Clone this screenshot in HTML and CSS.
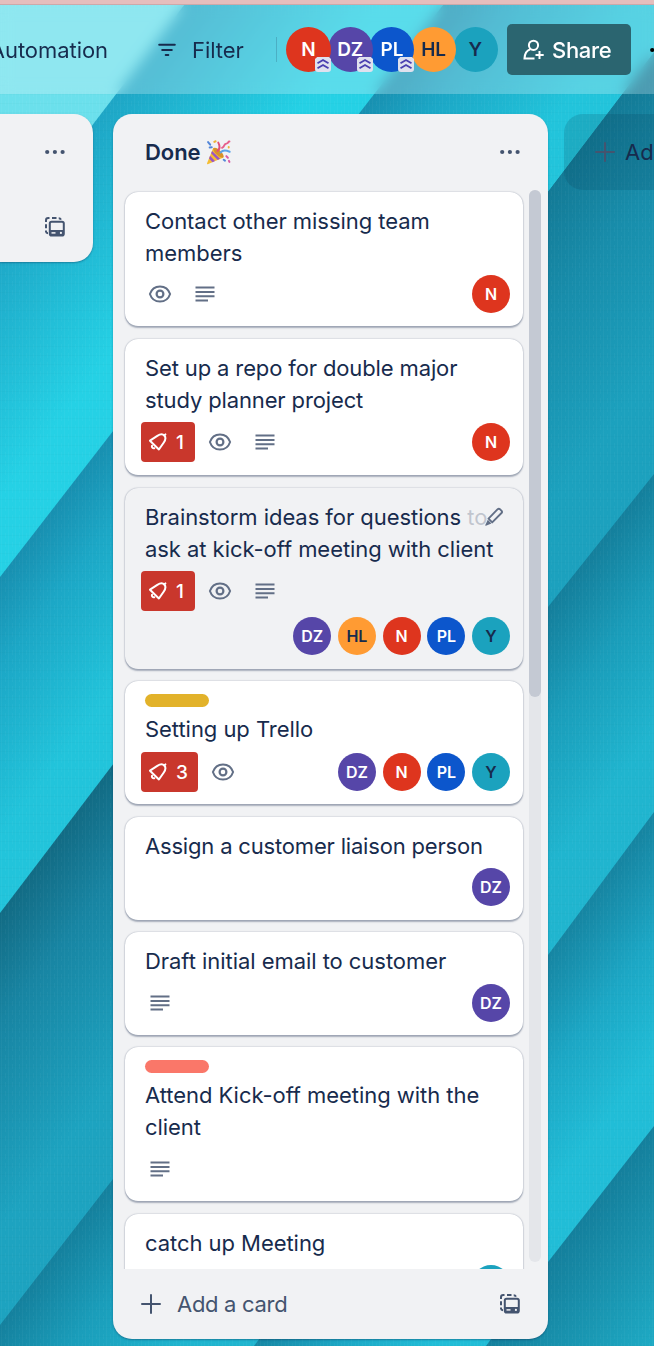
FILE: index.html
```html
<!DOCTYPE html>
<html lang="en">
<head>
<meta charset="utf-8">
<title>Board</title>
<link rel="stylesheet" href="styles.css">
</head>
<body>
<svg class="defs" width="0" height="0" aria-hidden="true">
  <symbol id="dots" viewBox="0 0 20 6"><circle cx="2.200" cy="3" r="2.100"/><circle cx="9.900" cy="3" r="2.100"/><circle cx="17.600" cy="3" r="2.100"/></symbol>
  <symbol id="eye" viewBox="0 0 24 24"><path d="M1.900 12C3.500 7.200 7.300 4.400 12 4.400S20.500 7.200 22.100 12C20.500 16.800 16.700 19.600 12 19.600S3.500 16.800 1.900 12Z" fill="none" stroke="currentColor" stroke-width="2"/><circle cx="12" cy="12" r="3.400" fill="none" stroke="currentColor" stroke-width="2.200"/></symbol>
  <symbol id="lines" viewBox="0 0 20 16"><path d="M.5 1.500H19.500M.5 5.900H19.500M.5 10.300H19.500M.5 14.500H13" stroke="currentColor" stroke-width="2"/></symbol>
  <symbol id="bell" viewBox="0 0 20 20"><g fill="none" stroke="currentColor" stroke-width="2" stroke-linejoin="round" stroke-linecap="round"><path d="M2 8.700 9.300 3.900C12 2.100 14.900 2 16.300 3.500 17.800 5.100 17.500 8 15.800 10.500L10.900 17.500Z"/><path d="M4 13.800C3.500 15.200 4.600 16.500 6.300 16.200"/><path d="M16.300 3.300 17.400 2.400"/></g></symbol>
  <symbol id="plus" viewBox="0 0 20 20"><path d="M10 1V19M1 10H19" stroke="currentColor" stroke-width="2" stroke-linecap="round"/></symbol>
  <symbol id="template" viewBox="0 0 20 20"><g fill="none" stroke="currentColor" stroke-width="2"><path d="M1 5V3.200Q1 1 3.200 1H4.500M7 1H11.500M13.700 1.200Q15.300 1.200 16 2.600M1 7.200V11.200M1 13.500V14.600Q1.200 16.200 3 16.200"/><rect x="4.800" y="4.800" width="14" height="13.800" rx="1.800"/></g><path d="M5 13H19V17.800Q19 19 17.800 19H6Q4.800 19 4.800 17.800Z" fill="currentColor"/><path d="M6.500 15.900H10.500" stroke="#f1f2f4" stroke-width="1.500"/><circle cx="15.900" cy="15.900" r="1.100" fill="#f1f2f4"/></symbol>
  <symbol id="chevrons" viewBox="0 0 16 15"><path d="M2.200 0H13.800L16 2V12Q16 15 13 15H3Q0 15 0 12V2Z" fill="#dfe1ee"/><path d="M2.500 6.300 8 3 13.500 6.300M2.500 11.300 8 8 13.500 11.300" fill="none" stroke="#4a3fb0" stroke-width="1.900"/></symbol>
</svg>

<svg class="wallpaper" width="654" height="1346" viewBox="0 0 654 1346" aria-hidden="true">
  <defs>
    <linearGradient id="g1" gradientUnits="userSpaceOnUse" x1="0" y1="246" x2="122" y2="340"><stop offset="0" stop-color="#1ea6c6"/><stop offset="1" stop-color="#25d1e5"/></linearGradient>
    <linearGradient id="g2" gradientUnits="userSpaceOnUse" x1="0" y1="577" x2="126" y2="674"><stop offset="0" stop-color="#188fb0"/><stop offset=".35" stop-color="#1ca7c6"/><stop offset="1" stop-color="#22c4db"/></linearGradient>
    <linearGradient id="g3" gradientUnits="userSpaceOnUse" x1="0" y1="913" x2="153" y2="1031"><stop offset="0" stop-color="#126b84"/><stop offset=".35" stop-color="#1885a3"/><stop offset="1" stop-color="#1da3c0"/></linearGradient>
    <linearGradient id="g3r" gradientUnits="userSpaceOnUse" x1="548" y1="192" x2="701" y2="310"><stop offset="0" stop-color="#137a96"/><stop offset=".4" stop-color="#188dab"/><stop offset="1" stop-color="#1ca1be"/></linearGradient>
    <linearGradient id="g4" gradientUnits="userSpaceOnUse" x1="548" y1="607" x2="675" y2="705"><stop offset="0" stop-color="#147e9b"/><stop offset=".45" stop-color="#1a9dba"/><stop offset="1" stop-color="#20b5cf"/></linearGradient>
    <linearGradient id="g5" gradientUnits="userSpaceOnUse" x1="548" y1="955" x2="664" y2="1044"><stop offset="0" stop-color="#1685a2"/><stop offset=".5" stop-color="#1ca7c5"/><stop offset="1" stop-color="#21bdd7"/></linearGradient>
    <linearGradient id="g6" gradientUnits="userSpaceOnUse" x1="548" y1="1262" x2="664" y2="1351"><stop offset="0" stop-color="#147f9c"/><stop offset="1" stop-color="#1faec8"/></linearGradient>
    <pattern id="weave" width="7" height="9" patternUnits="userSpaceOnUse"><path d="M1.500 0V9M5.500 2V7" stroke="#fff" stroke-opacity=".03"/><path d="M0 4.500H7" stroke="#00415a" stroke-opacity=".025"/></pattern>
  </defs>
  <rect width="654" height="1346" fill="#6be0ec"/>
  <path d="M0 246 188 0H654V1346H0Z" fill="url(#g1)"/>
  <path d="M0 577 447 0H654V1346H0Z" fill="url(#g2)"/>
  <path d="M0 913 548 192 694 0V1346H0Z" fill="url(#g3)"/>
  <path d="M330 479 548 192 694 0V1346H330Z" fill="url(#g3r)"/>
  <path d="M0 1325 113 1179 548 607 654 474V1346H0Z" fill="url(#g4)"/>
  <path d="M254 1346 548 955 654 812V1346Z" fill="url(#g5)"/>
  <path d="M486 1346 548 1262 654 1126V1346Z" fill="url(#g6)"/>
  <rect width="654" height="1346" fill="url(#weave)"/>
</svg>

<div class="page">
  <div class="window-edge"></div>
  <header class="toolbar">
    <div class="automation"><span>Automation</span></div>
    <div class="filter">
      <svg width="18" height="14" viewBox="0 0 18 14"><path d="M1.200 1.800H16.800M4.200 7H13.800M7.700 12H10.300" stroke="currentColor" stroke-width="2" stroke-linecap="round"/></svg>
      <span>Filter</span>
    </div>
    <div class="divider"></div>
    <div class="members">
      <div class="member red">N<svg class="rank"><use href="#chevrons"/></svg></div>
      <div class="member purple">DZ<svg class="rank"><use href="#chevrons"/></svg></div>
      <div class="member blue">PL<svg class="rank"><use href="#chevrons"/></svg></div>
      <div class="member orange">HL</div>
      <div class="member teal">Y</div>
    </div>
    <button class="share">
      <svg width="22" height="22" viewBox="0 0 22 22"><g fill="none" stroke="currentColor" stroke-width="2"><circle cx="10.500" cy="6.300" r="4.600"/><path d="M7.300 10.300C3.800 11.500 1.800 14.500 1.500 19.400H11.500M16.500 12V20M12.500 16H20.700"/></g></svg>
      <span>Share</span>
    </button>
    <svg class="more" width="20" height="6"><use href="#dots"/></svg>
  </header>

  <main class="board">
    <section class="list previous">
      <svg class="menu"><use href="#dots"/></svg>
      <svg class="template"><use href="#template"/></svg>
    </section>

    <section class="list done">
      <div class="list-head">
        <h2>Done</h2>
        <svg class="party" viewBox="0 0 24 24"><path d="M7 7.500 1 22.300Q.8 23.600 2.200 23L16.800 16.700Z" fill="#f5bd32"/><path d="M5.800 10.500 13.500 18.100 11.300 19.100 4.900 12.700ZM3.900 15.200 8.600 20.200 6.200 21.300 2.900 17.800Z" fill="#9a55c5"/><ellipse cx="12" cy="12.200" rx="6.500" ry="2.500" transform="rotate(43 12 12.200)" fill="#d8912a"/><g fill="none" stroke-width="1.900" stroke-linecap="round"><path d="M11 10.500C13.500 8.500 13.400 5.500 11.800 2.500" stroke="#e14f77"/><path d="M14 12C16 9.500 19.500 9.900 22.700 11.300" stroke="#5aa3ea"/><path d="M15.500 7.500C18.500 6.500 16.500 4 19.500 3.500S20.500 1.500 22.500 1.500" stroke="#e65f8a"/><path d="M2 2 4 4.500M5.500 7 3.500 7.200" stroke="#5386d8"/><path d="M8 1.800 9.200 1.200" stroke="#efb436"/><path d="M19.500 15.500 21 17M22 20 22.500 21" stroke="#d95ba4"/><path d="M17 19 18.200 19.800" stroke="#5386d8"/><path d="M21.800 6.800V7.200" stroke="#efb436"/></g></svg>
        <svg class="menu"><use href="#dots"/></svg>
      </div>
      <div class="scroll-area">
        <div class="cards">
          <article class="card c1">
            <h3>Contact other missing team<br>members</h3>
            <div class="badges"><svg class="eye"><use href="#eye"/></svg><svg class="desc"><use href="#lines"/></svg><div class="people"><i class="red">N</i></div></div>
          </article>
          <article class="card c2">
            <h3>Set up a repo for double major<br>study planner project</h3>
            <div class="badges"><b class="alert"><svg><use href="#bell"/></svg>1</b><svg class="eye"><use href="#eye"/></svg><svg class="desc"><use href="#lines"/></svg><div class="people"><i class="red">N</i></div></div>
          </article>
          <article class="card c3 hovered">
            <h3>Brainstorm ideas for questions <span class="faded">to</span><br>ask at kick-off meeting with client</h3>
            <svg class="pencil" viewBox="0 0 20 20"><path d="M4.500 11.700 13.700 2.200Q14.800 1.200 15.900 2.200L17.600 3.900Q18.500 5 17.500 6L8.200 15.400Z" fill="none" stroke="#626f86" stroke-width="1.900" stroke-linejoin="round"/><path d="M3.800 12.800 7.400 16.400 1.900 18.700Q1.100 18.900 1.300 18Z" fill="#626f86"/></svg>
            <div class="badges"><b class="alert"><svg><use href="#bell"/></svg>1</b><svg class="eye"><use href="#eye"/></svg><svg class="desc"><use href="#lines"/></svg></div>
            <div class="people"><i class="purple">DZ</i><i class="orange">HL</i><i class="red">N</i><i class="blue">PL</i><i class="teal">Y</i></div>
          </article>
          <article class="card c4">
            <div class="label yellow"></div>
            <h3>Setting up Trello</h3>
            <div class="badges"><b class="alert wide"><svg><use href="#bell"/></svg>3</b><svg class="eye"><use href="#eye"/></svg><div class="people"><i class="purple">DZ</i><i class="red">N</i><i class="blue">PL</i><i class="teal">Y</i></div></div>
          </article>
          <article class="card c5">
            <h3>Assign a customer liaison person</h3>
            <div class="badges"><div class="people"><i class="purple">DZ</i></div></div>
          </article>
          <article class="card c6">
            <h3>Draft initial email to customer</h3>
            <div class="badges"><svg class="desc"><use href="#lines"/></svg><div class="people"><i class="purple">DZ</i></div></div>
          </article>
          <article class="card c7">
            <div class="label coral"></div>
            <h3>Attend Kick-off meeting with the<br>client</h3>
            <div class="badges"><svg class="desc"><use href="#lines"/></svg></div>
          </article>
          <article class="card c8">
            <h3>catch up Meeting</h3>
            <div class="badges"><div class="people"><i class="teal">Y</i></div></div>
          </article>
        </div>
        <div class="scrollbar"><div class="thumb"></div></div>
      </div>
      <div class="list-foot">
        <svg class="plus"><use href="#plus"/></svg>
        <span>Add a card</span>
        <svg class="template"><use href="#template"/></svg>
      </div>
    </section>

    <section class="add-list">
      <svg class="plus"><use href="#plus"/></svg>
      <span>Add another list</span>
    </section>
  </main>
</div>
</body>
</html>
```
FILE: styles.css
```css
* { box-sizing: border-box; }
html, body { margin: 0; height: 1346px; overflow: hidden; }
body {
  width: 654px;
  position: relative;
  font-family: Inter, "Liberation Sans", sans-serif;
  font-size: 22px;
  letter-spacing: -.05px;
  color: #172b4d;
}
.defs, .wallpaper { position: absolute; left: 0; top: 0; }
.page { position: relative; height: 1346px; }
svg { display: block; flex: none; }

.window-edge { height: 5px; background: #e5bebd; border-bottom: 1px solid #cba9aa; }
.toolbar {
  height: 89px;
  display: flex;
  align-items: center;
  background: rgba(255, 255, 255, .24);
  backdrop-filter: blur(7px);
  overflow: hidden;
  white-space: nowrap;
}
.toolbar > * { flex: none; }
.automation { width: 108px; display: flex; justify-content: flex-end; }
.filter { display: flex; align-items: center; gap: 16px; margin-left: 50px; width: 118px; }
.divider { width: 1px; height: 25px; background: rgba(23, 43, 77, .2); }
.members { display: flex; margin-left: 9px; width: 221px; }
.member {
  position: relative;
  width: 45px; height: 45px;
  margin-right: -3.3px;
  border-radius: 50%;
  display: flex; align-items: center; justify-content: center;
  flex: none;
  font-size: 19px; font-weight: 600;
}
.member:nth-child(1) { z-index: 5; }
.member:nth-child(2) { z-index: 4; }
.member:nth-child(3) { z-index: 3; }
.member:nth-child(4) { z-index: 2; }
.rank { position: absolute; right: 0; bottom: 0; width: 16px; height: 15px; }
.red { background: #de351e; color: #fff; }
.purple { background: #5646a8; color: #fff; }
.blue { background: #0c56cc; color: #fff; }
.orange { background: #ff9b33; color: #172b4d; }
.teal { background: #1ba2be; color: #172b4d; }
.share {
  display: flex; align-items: center; gap: 7px;
  width: 124px; height: 51px;
  padding: 0 0 0 16px;
  border: 0; border-radius: 5px;
  background: #2b6570; color: #fff;
  font: 500 22px Inter, sans-serif;
  letter-spacing: -.3px;
}
.more { margin-left: 19px; }

.board { display: flex; align-items: flex-start; padding-top: 20px; overflow: hidden; height: 1252px; }
.list { background: #f1f2f4; border-radius: 19px; box-shadow: 0 1px 2px rgba(9, 30, 66, .35); flex: none; }
.menu { width: 20px; height: 6px; color: #44546f; fill: #44546f; }
.template { width: 20px; height: 20px; color: #44546f; }
.previous {
  width: 93px; height: 148px;
  border-radius: 0 19px 19px 0;
  padding: 35px 28px 25px 45px;
  display: flex; flex-direction: column; justify-content: space-between;
}
.done { width: 435px; height: 1225px; margin-left: 20px; display: flex; flex-direction: column; }
.list-head { height: 76px; padding: 0 28px 0 32px; display: flex; align-items: center; }
h2 { margin: 0; font-size: 22px; font-weight: 600; }
.party { width: 25px; height: 25px; margin-left: 5px; }
.list-head .menu { margin-left: auto; }

.scroll-area { height: 1079px; display: flex; overflow: hidden; padding-left: 12px; }
.cards { width: 398px; padding-top: 2px; display: flex; flex-direction: column; gap: 12px; flex: none; }
.card {
  position: relative;
  padding: 13px 13px 13px 20px;
  border-radius: 13px;
  background: #fff;
  box-shadow: 0 1.5px 1.5px rgba(9, 30, 66, .3), 0 0 1.5px rgba(9, 30, 66, .35);
  flex: none;
}
.c1 { height: 134px; margin-bottom: 1px; }
.c2 { height: 136px; margin-bottom: 1px; }
.c3 { height: 181px; }
.c4 { height: 123px; margin-bottom: 1px; }
.c5, .c6 { height: 103px; }
.c7 { height: 154px; margin-bottom: 1px; }
.hovered { background: #f1f2f4; }
h3 { margin: 0 0 5px; font-size: 22px; line-height: 32px; font-weight: 400; white-space: nowrap; }
.c2 h3, .c3 h3, .c4 h3, .c6 h3, .c7 h3 { margin-bottom: 6px; }
.c4 h3 { margin-bottom: 7px; }
.c2 h3 { letter-spacing: -.13px; }
.c5 h3 { letter-spacing: -.18px; }
.faded { opacity: .22; }
.pencil { position: absolute; right: 19px; top: 19px; width: 20px; height: 20px; }
.badges { height: 40px; display: flex; align-items: center; color: #626f86; }
.eye { width: 24px; height: 24px; margin: 0 22px 0 4px; }
.badges > .eye:first-child { margin-left: 3px; margin-right: 23px; }
.badges > .alert + .eye { margin-left: 3px; margin-right: 23px; }
.desc { width: 20px; height: 16px; }
.c6 .desc, .c7 .desc { margin-left: 5px; }
.alert {
  width: 54px; height: 40px;
  margin: 0 10px 0 -4px;
  padding-left: 7px;
  display: flex; align-items: center; gap: 8px;
  background: #c9372c; color: #fff;
  border-radius: 4px;
  font-size: 19px; font-weight: 500;
}
.alert.wide { width: 57px; }
.alert svg { width: 20px; height: 20px; }
.people { display: flex; justify-content: flex-end; gap: 6.7px; margin-left: auto; }
.people i {
  width: 38px; height: 38px;
  border-radius: 50%;
  display: flex; align-items: center; justify-content: center;
  font-size: 16px; font-weight: 600; font-style: normal;
}
.c3 .people { margin-top: 6px; }
.label { width: 64px; height: 13px; border-radius: 7px; margin-bottom: 6px; }
.yellow { background: #e2b22a; }
.coral { background: #fa7769; }
.scrollbar { width: 12px; height: 1072px; margin-left: 6px; border-radius: 6px; background: #e4e6ea; }
.thumb { height: 507px; border-radius: 6px; background: #c4c9d3; }

.list-foot { height: 70px; padding: 0 28px; display: flex; align-items: center; color: #44546f; }
.plus { width: 20px; height: 20px; }
.list-foot span { margin-left: 16px; letter-spacing: -.3px; }
.list-foot .template { margin-left: auto; }

.add-list {
  width: 435px; height: 76px;
  margin-left: 16px; padding-left: 31px;
  border-radius: 19px;
  display: flex; align-items: center; gap: 10px;
  background: rgba(9, 50, 75, .16);
  flex: none;
  white-space: nowrap;
}
.add-list .plus { color: #44546f; }
```
